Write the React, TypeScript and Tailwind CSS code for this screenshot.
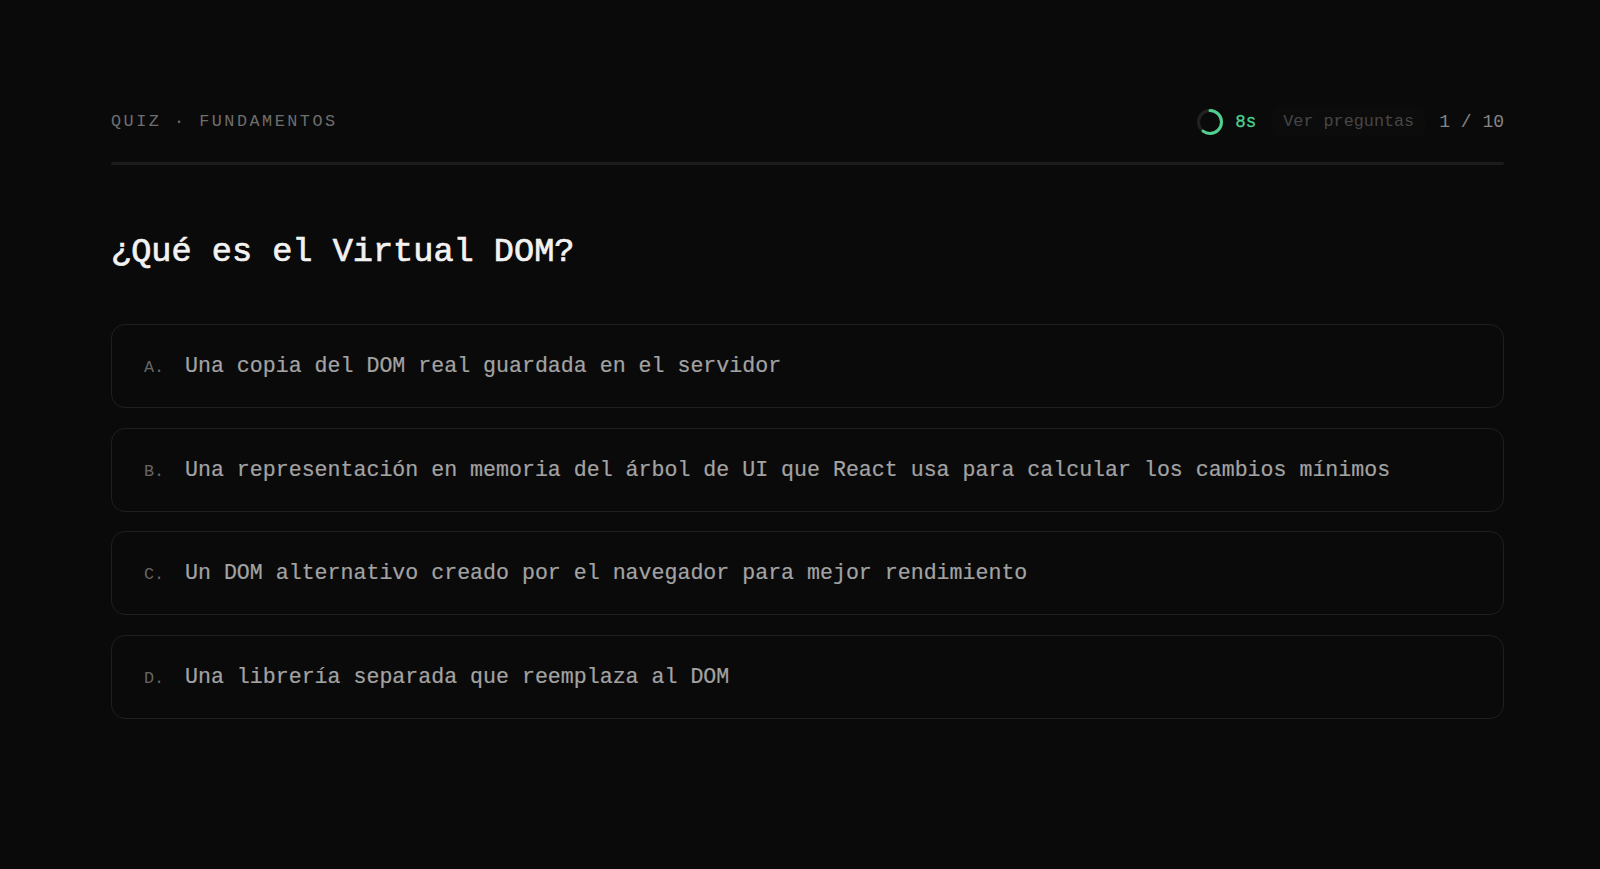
import React from 'react';

const options = [
  { key: 'A', text: 'Una copia del DOM real guardada en el servidor' },
  { key: 'B', text: 'Una representación en memoria del árbol de UI que React usa para calcular los cambios mínimos' },
  { key: 'C', text: 'Un DOM alternativo creado por el navegador para mejor rendimiento' },
  { key: 'D', text: 'Una librería separada que reemplaza al DOM' },
];

function TimerRing({ progress }: { progress: number }) {
  const r = 11.5;
  const c = 2 * Math.PI * r;
  return (
    <svg width="28" height="28" viewBox="0 0 28 28" className="-rotate-90">
      <circle cx="14" cy="14" r={r} fill="none" stroke="#222222" strokeWidth="3" />
      <circle
        cx="14"
        cy="14"
        r={r}
        fill="none"
        stroke="#4fd08e"
        strokeWidth="3"
        strokeLinecap="round"
        strokeDasharray={`${c * progress} ${c}`}
      />
    </svg>
  );
}

export default function App() {
  return (
    <div className="min-h-screen bg-[#0a0a0a] font-['Liberation_Mono','DejaVu_Sans_Mono',monospace]">
      <div className="pl-[111px] pr-[96px] pt-[108px]">
        {/* header */}
        <div className="flex h-[28px] items-center justify-between">
          <p className="text-[16.8px] uppercase tracking-[0.15em] text-[#6e6e6e]">Quiz · Fundamentos</p>
          <div className="flex items-center">
            <TimerRing progress={0.6} />
            <span className="ml-[11px] text-[17.5px] text-[#4fd08e] [-webkit-text-stroke:0.3px_#4fd08e]">8s</span>
            <button className="ml-[16px] rounded-md bg-[#0c0c0c] px-[11px] py-[2px] text-[16.8px] text-[#464646]">
              Ver preguntas
            </button>
            <span className="ml-[14px] text-[18px] text-[#858585]">1 / 10</span>
          </div>
        </div>
        <div className="mt-[25.5px] h-[3px] rounded-full bg-[#1c1c1c]" />

        <h1 className="mt-[66.5px] text-[33.6px] leading-[42px] text-[#f2f2f2] [-webkit-text-stroke:0.7px_#f2f2f2]">
          ¿Qué es el Virtual DOM?
        </h1>

        <ul className="mt-[51px] flex flex-col gap-[19.6px]">
          {options.map((opt) => (
            <li
              key={opt.key}
              className="flex h-[84px] items-baseline rounded-[14px] border border-[#1f1f1f] pl-[32px] pt-[25px]"
            >
              <span className="w-[20px] text-[16.8px] text-[#666666]">{opt.key}.</span>
              <span className="ml-[21px] text-[21.6px] leading-[32px] text-[#a3a3a3] [-webkit-text-stroke:0.2px_#a3a3a3]">
                {opt.text}
              </span>
            </li>
          ))}
        </ul>
      </div>
    </div>
  );
}
